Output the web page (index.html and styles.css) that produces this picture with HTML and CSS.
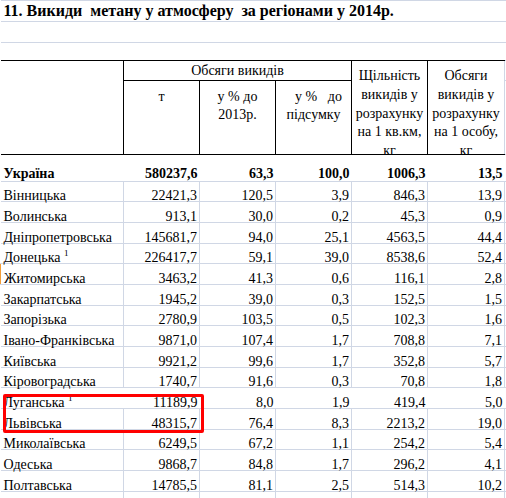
FILE: index.html
```html
<!DOCTYPE html>
<html lang="uk">
<head>
    <meta charset="UTF-8">
    <meta name="viewport" content="width=device-width, initial-scale=1.0">
    <title>Викиди метану</title>
    <link rel="stylesheet" href="styles.css">
</head>
<body>
    <!-- Аркуш таблиці -->
    <div class="sheet-wrap">
        <table class="sheet">
            <colgroup>
                <col class="c-name">
                <col class="c-num">
                <col class="c-num">
                <col class="c-num">
                <col class="c-num">
                <col class="c-last">
                <col class="c-edge">
            </colgroup>

            <tr class="r-cut">
                <td></td><td></td><td></td><td></td><td></td><td></td><td></td>
            </tr>
            <tr class="r-title blank">
                <td colspan="6" class="title">11. Викиди  метану у атмосферу  за регіонами у 2014р.</td>
                <td class="edge"></td>
            </tr>
            <tr class="r-empty blank">
                <td colspan="6"></td><td class="edge"></td>
            </tr>
            <tr class="r-empty2 blank">
                <td colspan="6"></td><td class="edge"></td>
            </tr>

            <!-- Шапка -->
            <tr class="r-head1">
                <td rowspan="2" class="h h-first"></td>
                <td colspan="3" class="h h-mid">Обсяги викидів</td>
                <td rowspan="2" class="h h-tall"><div class="stack">Щільність<br>викидів у<br>розрахунку<br>на 1 кв.км,<br>кг</div></td>
                <td rowspan="2" class="h h-tall h-end"><div class="stack">Обсяги<br>викидів у<br>розрахунку<br>на 1 особу,<br>кг</div></td>
                <td class="edge"></td>
            </tr>
            <tr class="r-head2">
                <td class="h h-sub">т</td>
                <td class="h h-sub">у % до<br>2013р.</td>
                <td class="h h-sub"><span class="spread">у %   до</span><br>підсумку</td>
                <td class="edge"></td>
            </tr>

            <!-- Дані -->
            <tr class="r-total blank">
                <td>Україна</td><td class="n">580237,6</td><td class="n">63,3</td><td class="n">100,0</td><td class="n">1006,3</td><td class="n">13,5</td><td class="edge"></td>
            </tr>
            <tr class="r-row">
                <td>Вінницька</td><td class="n">22421,3</td><td class="n">120,5</td><td class="n">3,9</td><td class="n">846,3</td><td class="n">13,9</td><td class="edge"></td>
            </tr>
            <tr class="r-row">
                <td>Волинська</td><td class="n">913,1</td><td class="n">30,0</td><td class="n">0,2</td><td class="n">45,3</td><td class="n">0,9</td><td class="edge"></td>
            </tr>
            <tr class="r-row">
                <td>Дніпропетровська</td><td class="n">145681,7</td><td class="n">94,0</td><td class="n">25,1</td><td class="n">4563,5</td><td class="n">44,4</td><td class="edge"></td>
            </tr>
            <tr class="r-row">
                <td>Донецька <sup>1</sup></td><td class="n">226417,7</td><td class="n">59,1</td><td class="n">39,0</td><td class="n">8538,6</td><td class="n">52,4</td><td class="edge"></td>
            </tr>
            <tr class="r-row">
                <td class="sel">Житомирська</td><td class="n">3463,2</td><td class="n">41,3</td><td class="n">0,6</td><td class="n">116,1</td><td class="n">2,8</td><td class="edge"></td>
            </tr>
            <tr class="r-row">
                <td>Закарпатська</td><td class="n">1945,2</td><td class="n">39,0</td><td class="n">0,3</td><td class="n">152,5</td><td class="n">1,5</td><td class="edge"></td>
            </tr>
            <tr class="r-row">
                <td>Запорізька</td><td class="n">2780,9</td><td class="n">103,5</td><td class="n">0,5</td><td class="n">102,3</td><td class="n">1,6</td><td class="edge"></td>
            </tr>
            <tr class="r-row">
                <td>Івано-Франківська</td><td class="n">9871,0</td><td class="n">107,4</td><td class="n">1,7</td><td class="n">708,8</td><td class="n">7,1</td><td class="edge"></td>
            </tr>
            <tr class="r-row">
                <td>Київська</td><td class="n">9921,2</td><td class="n">99,6</td><td class="n">1,7</td><td class="n">352,8</td><td class="n">5,7</td><td class="edge"></td>
            </tr>
            <tr class="r-row">
                <td>Кіровоградська</td><td class="n">1740,7</td><td class="n">91,6</td><td class="n">0,3</td><td class="n">70,8</td><td class="n">1,8</td><td class="edge"></td>
            </tr>
            <tr class="r-row blank">
                <td>Луганська <sup>1</sup></td><td class="n">11189,9</td><td class="n">8,0</td><td class="n">1,9</td><td class="n">419,4</td><td class="n">5,0</td><td class="edge"></td>
            </tr>
            <tr class="r-row">
                <td>Львівська</td><td class="n">48315,7</td><td class="n">76,4</td><td class="n">8,3</td><td class="n">2213,2</td><td class="n">19,0</td><td class="edge"></td>
            </tr>
            <tr class="r-row">
                <td>Миколаївська</td><td class="n">6249,5</td><td class="n">67,2</td><td class="n">1,1</td><td class="n">254,2</td><td class="n">5,4</td><td class="edge"></td>
            </tr>
            <tr class="r-row">
                <td>Одеська</td><td class="n">9868,7</td><td class="n">84,8</td><td class="n">1,7</td><td class="n">296,2</td><td class="n">4,1</td><td class="edge"></td>
            </tr>
            <tr class="r-row">
                <td>Полтавська</td><td class="n">14785,5</td><td class="n">81,1</td><td class="n">2,5</td><td class="n">514,3</td><td class="n">10,2</td><td class="edge"></td>
            </tr>
            <tr class="r-row">
                <td></td><td></td><td></td><td></td><td></td><td></td><td class="edge"></td>
            </tr>
        </table>

        <!-- Виділення рядків -->
        <div class="mark"></div>
    </div>
</body>
</html>
```

FILE: styles.css
```css
/* Загальні стилі */
body {
    margin: 0;
    background: #fff;
    color: #000;
    font-family: "Liberation Serif", "Times New Roman", serif;
    overflow: hidden;
}

.sheet-wrap {
    position: relative;
    width: 506px;
}

/* Таблиця */
.sheet {
    border-collapse: collapse;
    table-layout: fixed;
    width: 506px;
}

.c-name { width: 123px; }
.c-num  { width: 76px; }
.c-last { width: 77px; }
.c-edge { width: 2px; }

.sheet td {
    border: 1px solid #d0d7e5;
    padding: 0 2px 1px 3px;
    font-size: 14px;
    line-height: 16px;
    vertical-align: bottom;
    white-space: nowrap;
}

.sheet td:first-child {
    border-left: none;
}

.sheet td.edge {
    padding: 0;
}

/* Рядки без сітки */
.blank td {
    border-left: none;
    border-right: none;
}

.r-cut td { height: 0; padding: 0; border-top: none; }
.r-title td { height: 19px; }
.r-empty td { height: 19px; }
.r-empty2 td { height: 16px; border-bottom: 1px solid #000; }
.r-empty2 td.edge { border-bottom-color: #d0d7e5; }

.title {
    font-weight: bold;
    font-size: 16px !important;
    line-height: 18px !important;
    white-space: pre !important;
}

/* Шапка */
.sheet td.h {
    border: 1px solid #000;
    text-align: center;
    white-space: normal;
    padding: 0 2px;
}

.sheet td.h-first { border-left: none; }
.sheet td.h-end { border-right-color: #d0d7e5; }

.r-head1 td { height: 19px; }
.r-head2 td { height: 66px; }

.h-mid {
    vertical-align: middle !important;
    line-height: 18px !important;
}

.sheet td.h-tall {
    vertical-align: top;
}

.stack {
    height: 78px;
    padding-top: 6px;
    line-height: 18.75px;
}

.sheet td.h-sub {
    vertical-align: top;
    line-height: 17.5px;
    padding-top: 7px;
}

.spread {
    white-space: pre;
    padding-left: 10px;
}

/* Дані */
.sheet .r-total td {
    height: 24.5px;
    font-weight: bold;
    line-height: 13px;
}

.sheet .r-row td {
    height: 19.7px;
    padding-bottom: 0;
    line-height: 10px;
}

.n { text-align: right; }

sup {
    font-size: 9px;
    line-height: 0;
    vertical-align: 6px;
}

.sheet td.sel {
    border-left: 1px solid #f29d38;
}

/* Червона рамка */
.mark {
    position: absolute;
    left: 3px;
    top: 394px;
    width: 195px;
    height: 33px;
    border: 3px solid #ff0000;
    border-radius: 2px;
}
```
